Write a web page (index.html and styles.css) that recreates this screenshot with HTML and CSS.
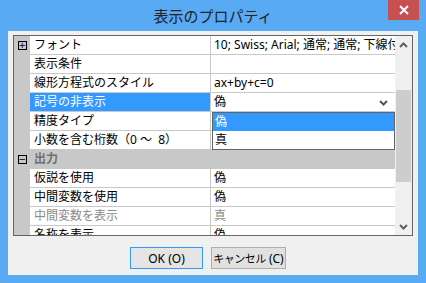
FILE: index.html
```html
<!DOCTYPE html>
<html lang="ja">
<head>
  <meta charset="UTF-8" />
  <title>表示のプロパティ</title>
  <link rel="stylesheet" href="styles.css">
</head>
<body>
  <div class="window">
    <div class="titlebar">
      <span class="title">表示のプロパティ</span>
      <div class="close">
        <svg width="10" height="10" viewBox="0 0 10 10"><path d="M1 1L9 9M9 1L1 9" stroke="#fff" stroke-width="2"/></svg>
      </div>
    </div>

    <div class="client">
      <div class="grid">
        <div class="rows">
          <div class="row">
            <div class="gutter"><span class="toggle">+</span></div>
            <div class="name">フォント</div>
            <div class="value">10; Swiss; Arial; 通常; 通常; 下線付き</div>
          </div>
          <div class="row">
            <div class="gutter"></div>
            <div class="name">表示条件</div>
            <div class="value"></div>
          </div>
          <div class="row">
            <div class="gutter"></div>
            <div class="name">線形方程式のスタイル</div>
            <div class="value">ax+by+c=0</div>
          </div>
          <div class="row active">
            <div class="gutter"></div>
            <div class="name">記号の非表示</div>
            <div class="value">偽
              <svg class="chevron" width="9" height="6" viewBox="0 0 9 6"><path d="M1 1L4.5 4.5L8 1" fill="none" stroke="#555" stroke-width="2"/></svg>
            </div>
          </div>
          <div class="row">
            <div class="gutter"></div>
            <div class="name">精度タイプ</div>
            <div class="value"></div>
          </div>
          <div class="row">
            <div class="gutter"></div>
            <div class="name">小数を含む桁数（0 ～&nbsp;&nbsp;8）</div>
            <div class="value"></div>
          </div>
          <div class="row category">
            <div class="gutter"><span class="toggle">−</span></div>
            <div class="name">出力</div>
          </div>
          <div class="row">
            <div class="gutter"></div>
            <div class="name">仮説を使用</div>
            <div class="value">偽</div>
          </div>
          <div class="row">
            <div class="gutter"></div>
            <div class="name">中間変数を使用</div>
            <div class="value">偽</div>
          </div>
          <div class="row disabled">
            <div class="gutter"></div>
            <div class="name">中間変数を表示</div>
            <div class="value">真</div>
          </div>
          <div class="row">
            <div class="gutter"></div>
            <div class="name">名称を表示</div>
            <div class="value">偽</div>
          </div>

          <!-- open dropdown of 記号の非表示 -->
          <ul class="dropdown">
            <li class="selected">偽</li>
            <li>真</li>
          </ul>
        </div>

        <div class="scrollbar">
          <div class="arrow">
            <svg width="9" height="6" viewBox="0 0 9 6"><path d="M1 5L4.5 1.5L8 5" fill="none" stroke="#606060" stroke-width="2"/></svg>
          </div>
          <div class="track"><div class="thumb"></div></div>
          <div class="arrow">
            <svg width="9" height="6" viewBox="0 0 9 6"><path d="M1 1L4.5 4.5L8 1" fill="none" stroke="#606060" stroke-width="2"/></svg>
          </div>
        </div>
      </div>

      <div class="buttons">
        <button class="btn default">OK (O)</button>
        <button class="btn cancel"><span class="kana">キャンセル</span> (C)</button>
      </div>
    </div>
  </div>
</body>
</html>
```

FILE: styles.css
```css
body {
  margin: 0;
  font-family: "Noto Sans", "Noto Sans CJK JP", sans-serif;
  font-size: 12px;
  color: #000;
}

.window {
  width: 426px;
  height: 283px;
  background: #58aaf3;
  display: flex;
  flex-direction: column;
}

.titlebar {
  height: 31px;
  display: grid;
  grid-template-columns: 1fr auto 1fr;
}

.title {
  grid-column: 2;
  align-self: center;
  font-family: "Noto Sans CJK JP", sans-serif;
  font-size: 15px;
  color: #222;
  padding-bottom: 1px;
}

.close {
  grid-column: 3;
  justify-self: end;
  width: 31px;
  height: 20px;
  margin-right: 7px;
  background: #c75050;
  display: flex;
  align-items: center;
  justify-content: center;
}

.client {
  flex: 1;
  margin: 0 8px 8px;
  background: #f0f0f0;
  padding: 4px 5px 0;
}

.grid {
  width: 398px;
  height: 199px;
  border: 1px solid #646464;
  display: flex;
  background: #fff;
}

.rows {
  position: relative;
  width: 381px;
  overflow: hidden;
}

.row {
  display: grid;
  grid-template-columns: 16px 180px 1fr;
  height: 19px;
  line-height: 18px;
}

.gutter {
  background: #c8c8c8;
  display: flex;
  align-items: center;
  justify-content: center;
  padding-bottom: 1px;
}

.toggle {
  width: 7px;
  height: 7px;
  border: 1px solid #000;
  font-size: 9px;
  line-height: 7px;
  text-align: center;
  font-family: "DejaVu Sans", sans-serif;
  overflow: hidden;
}

.name {
  padding-left: 4px;
  border-bottom: 1px solid #c8c8c8;
  white-space: nowrap;
  overflow: hidden;
}

.value {
  position: relative;
  padding-left: 3px;
  border-left: 1px solid #c8c8c8;
  border-bottom: 1px solid #c8c8c8;
  white-space: nowrap;
  overflow: hidden;
}

.row.active .name {
  background: #3399ff;
  color: #fff;
}

.chevron {
  position: absolute;
  right: 7px;
  top: 7px;
}

.row.category {
  background: #c8c8c8;
}

.row.category .name {
  grid-column: 2 / 4;
  font-weight: bold;
  color: #707070;
  border-bottom-color: #c8c8c8;
}

.row.disabled .name,
.row.disabled .value {
  color: #8a8a8a;
}

.dropdown {
  position: absolute;
  left: 198px;
  top: 76px;
  width: 181px;
  margin: 0;
  padding: 0;
  list-style: none;
  border: 1px solid #646464;
  background: #fff;
}

.dropdown li {
  height: 18px;
  line-height: 18px;
  padding-left: 2px;
}

.dropdown li.selected {
  background: #3399ff;
  color: #fff;
}

.scrollbar {
  width: 17px;
  background: #f0f0f0;
  display: flex;
  flex-direction: column;
}

.arrow {
  height: 17px;
  display: flex;
  align-items: center;
  justify-content: center;
}

.track {
  flex: 1;
  padding-top: 37px;
}

.thumb {
  margin: 0 1px;
  height: 92px;
  background: #cdcdcd;
}

.buttons {
  display: flex;
  justify-content: center;
  gap: 8px;
  margin-top: 11px;
  padding-right: 10px;
}

.btn {
  height: 22px;
  padding: 0;
  font-family: "Noto Sans", "Noto Sans CJK JP", sans-serif;
  font-size: 12px;
  color: #000;
  background: #e1e1e1;
  border: 1px solid #adadad;
  white-space: nowrap;
}

.btn.default {
  width: 73px;
  border-color: #3399ff;
  background: #e5e5e5;
}

.btn.cancel {
  width: 75px;
}

.kana {
  font-size: 11px;
  letter-spacing: -0.5px;
}
```
